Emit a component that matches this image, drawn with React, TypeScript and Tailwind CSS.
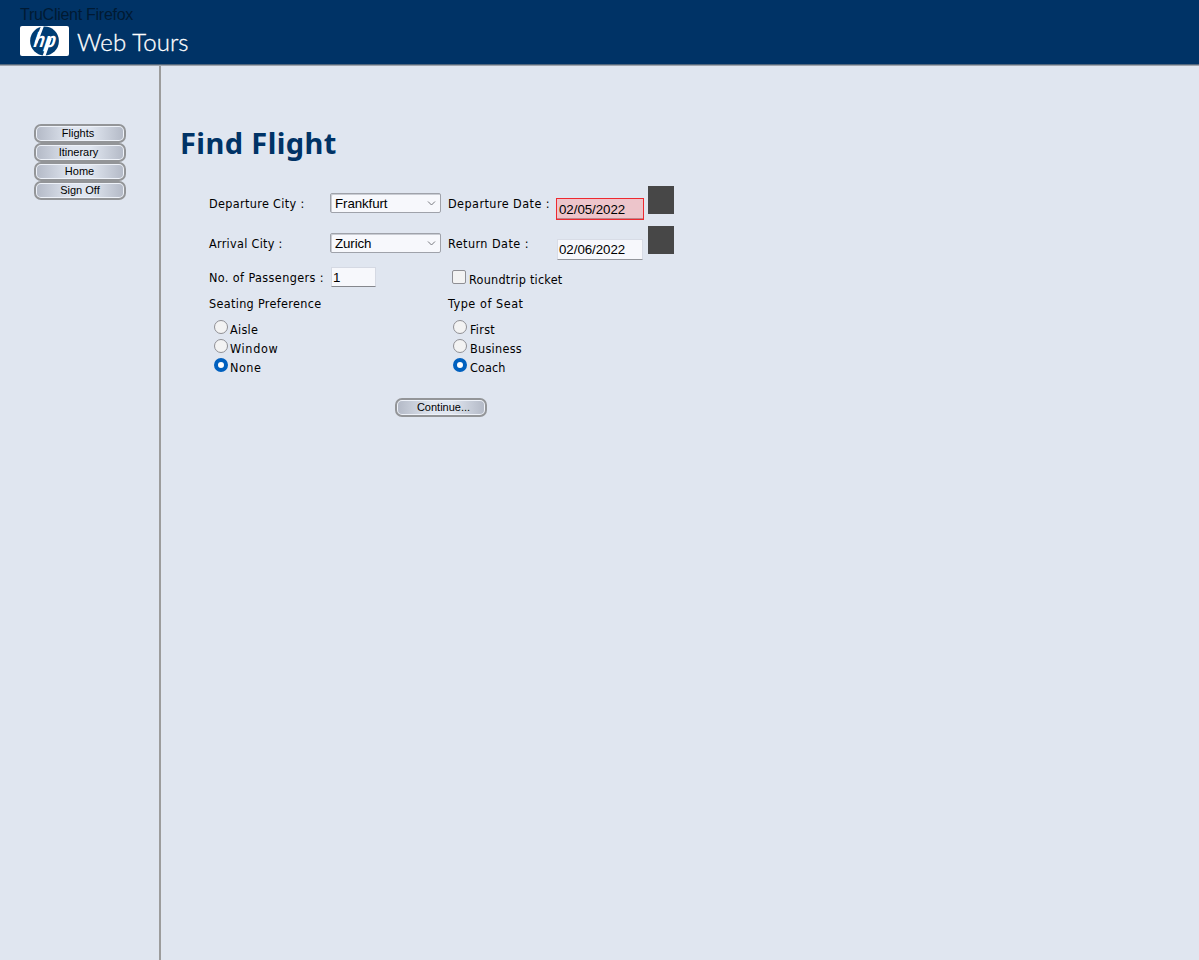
import React from "react";

const label = "whitespace-nowrap font-['DejaVu_Sans_Condensed','DejaVu_Sans',sans-serif] [font-stretch:condensed] text-[12.5px] leading-4 text-black";

function NavButton({ text, shift = "" }: { text: string; shift?: string }) {
  return (
    <button type="button" className="flex h-[19px] w-[92px] rounded-[7px] border-2 border-[#939598] bg-[#eef2f9] p-px">
      <span className={`flex h-full w-full items-center justify-center rounded-[4px] bg-linear-[90deg,#b4bac7_0%,#e0e6f0_40%,#e0e6f0_62%,#b4bac7_100%] font-['Liberation_Sans',Arial,sans-serif] text-[11px] leading-none text-black ${shift}`}>
        {text}
      </span>
    </button>
  );
}

function Select({ value }: { value: string }) {
  return (
    <div className="flex h-5 w-[111px] items-center justify-between rounded-[2px] border border-[#9fa2aa] bg-[#f7f8fc] pt-px pr-1 pl-[4px] shadow-[inset_1px_1px_0_#c9ccd3] font-['Liberation_Sans',Arial,sans-serif] text-[13.33px] tracking-[-0.1px]">
      <span>{value}</span>
      <svg width="9" height="6" viewBox="0 0 9 6" fill="none" stroke="#77797e"><path d="M1 0.5l3.5 3.5L8 0.5" /></svg>
    </div>
  );
}

function Radio({ text, checked = false, gap = "mr-[2px]", spacing = "tracking-[0.3px]" }: { text: string; checked?: boolean; gap?: string; spacing?: string }) {
  return (
    <label className="flex h-[19px]">
      <span className={`${gap} h-[14px] w-[14px] rounded-full ${checked ? "border-4 border-[#0060bf] bg-white" : "border border-[#8f8f94] bg-[#f3f3f3]"}`} />
      <span className={`${label} pt-[2px] ${spacing}`}>{text}</span>
    </label>
  );
}

export default function App() {
  return (
    <div className="flex h-[960px] w-[1199px] flex-col overflow-hidden bg-[#e0e6f0]">
      <header className="h-[66px] bg-[#003366] pt-[6px] pl-5 shadow-[inset_0_-1px_0_#a0a5ad,inset_0_-2px_0_#53687e]">
        <div className="h-5 whitespace-nowrap font-['Liberation_Sans',Arial,sans-serif] text-base leading-[18px] tracking-[-0.27px] text-[#001a33]">TruClient Firefox</div>
        <div className="flex h-[30px]">
          <svg width="49" height="30" viewBox="0 0 49 30">
            <rect width="49" height="30" rx="2" fill="#fff" />
            <circle cx="24.5" cy="15" r="14.4" fill="#003d73" />
            <path d="M22.5 0L16 17M24 30L30.5 12" stroke="#fff" strokeWidth="2.8" />
            <text transform="translate(13 20.8) skewX(-9)" x="0" y="0" fill="#fff" fontFamily="Liberation Sans" fontWeight="bold" fontStyle="italic" fontSize="21" textLength="22" lengthAdjust="spacingAndGlyphs">hp</text>
          </svg>
          <span className="ml-2 whitespace-nowrap font-['Lato',sans-serif] text-[24px] leading-[32px] font-light tracking-[0.1px] text-white [-webkit-text-stroke:0.3px_white]">Web Tours</span>
        </div>
      </header>
      <div className="flex flex-1">
        <aside className="w-[161px] border-r-2 border-[#9c9c9c] pt-[58px] pl-[34px]">
          <NavButton text="Flights" shift="pr-1" />
          <NavButton text="Itinerary" shift="pr-[3px]" />
          <NavButton text="Home" shift="pr-px" />
          <NavButton text="Sign Off" />
        </aside>
        <main className="flex-1 pt-[58px] pl-[19px]">
          <h1 className="h-[62px] whitespace-nowrap font-['Noto_Sans',sans-serif] text-[29px] leading-[38px] font-bold tracking-[0.4px] text-[#003366]">Find Flight</h1>
          <form className="ml-[29px] w-[480px]">
            <div className="flex h-10">
              <span className={`${label} mt-[10px] w-[121px] tracking-[0.35px]`}>Departure City :</span>
              <div className="mt-[7px] w-[118px]"><Select value="Frankfurt" /></div>
              <span className={`${label} mt-[10px] w-[108px] tracking-[0.45px]`}>Departure Date :</span>
              <div className="mt-3 h-[22px] w-[88px] border border-[#ee2930] bg-[#edc5cb] pl-[2px] font-['Liberation_Sans',sans-serif] text-[13.33px] leading-[21px] tracking-[-0.05px] shadow-[inset_0_-1px_0_#bc858b]">02/05/2022</div>
              <div className="ml-1 h-7 w-[26px] bg-[#474747]" />
            </div>
            <div className="flex h-10">
              <span className={`${label} mt-[10px] w-[121px] tracking-[0.3px]`}>Arrival City :</span>
              <div className="mt-[7px] w-[118px]"><Select value="Zurich" /></div>
              <span className={`${label} mt-[10px] w-[109px] tracking-[0.45px]`}>Return Date :</span>
              <div className="mt-[13px] h-[21px] w-[86px] border border-b-[#92959b] border-[#d8dce6] bg-[#f7f8fc] pl-px font-['Liberation_Sans',sans-serif] text-[13.33px] leading-[20px] tracking-[-0.05px]">02/06/2022</div>
              <div className="ml-[5px] h-7 w-[26px] bg-[#474747]" />
            </div>
            <div className="flex h-[29px]">
              <span className={`${label} mt-1 w-[122px] tracking-[0.4px]`}>No. of Passengers :</span>
              <div className="mt-px h-5 w-[45px] border border-b-[#85878d] border-[#d5d9e3] bg-[#f7f8fc] pl-px font-['Liberation_Sans',sans-serif] text-[13.33px] leading-[19px]">1</div>
              <span className="mt-1 ml-[76px] h-[14px] w-[14px] rounded-[2px] border border-[#8f8f94] bg-[#f3f3f3]" />
              <span className={`${label} mt-[6px] ml-[3px] tracking-[0.25px]`}>Roundtrip ticket</span>
            </div>
            <div className="flex h-[25px]">
              <span className={`${label} mt-px w-[239px] tracking-[0.33px]`}>Seating Preference</span>
              <span className={`${label} mt-px tracking-[0.55px]`}>Type of Seat</span>
            </div>
            <div className="flex h-[78px]">
              <div className="w-[239px] pl-[5px]"><Radio text="Aisle" /><Radio text="Window" spacing="tracking-[0.7px]" /><Radio text="None" checked spacing="tracking-[0.5px]" /></div>
              <div className="pl-[5px]"><Radio text="First" gap="mr-[3px]" /><Radio text="Business" gap="mr-[3px]" /><Radio text="Coach" checked gap="mr-[3px]" spacing="tracking-[0.1px]" /></div>
            </div>
            <div className="ml-[186px]"><NavButton text="Continue..." shift="pl-[5px]" /></div>
          </form>
        </main>
      </div>
    </div>
  );
}
